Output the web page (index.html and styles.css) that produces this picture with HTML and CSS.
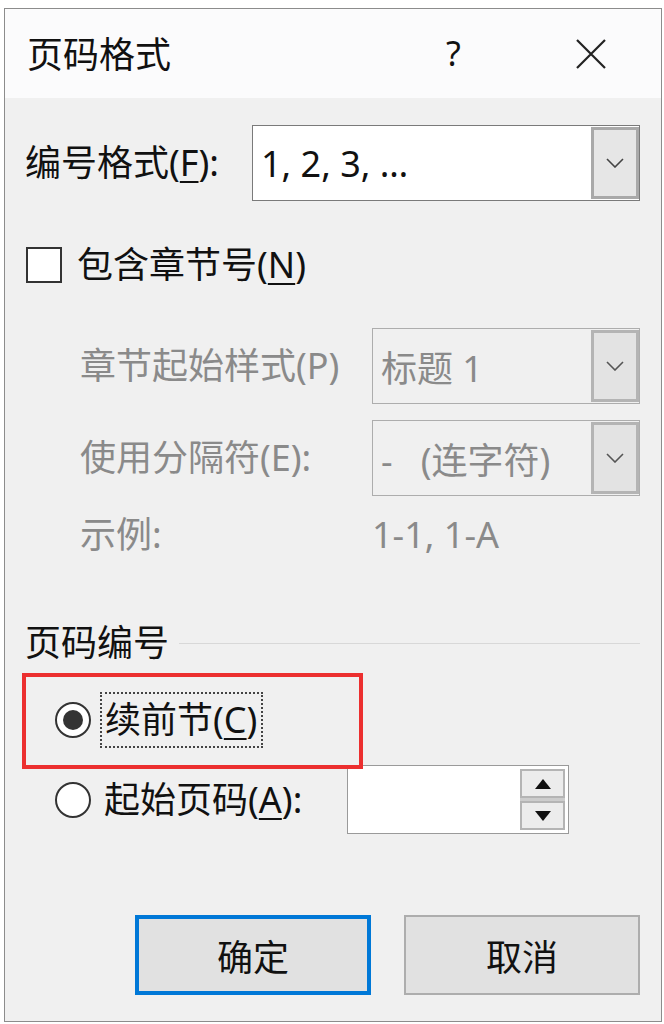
FILE: index.html
```html
<!DOCTYPE html>
<html lang="zh-CN">
<head>
    <meta charset="UTF-8">
    <meta name="viewport" content="width=device-width, initial-scale=1.0">
    <title>页码格式</title>
    <link rel="stylesheet" href="styles.css">
</head>
<body>
    <div class="dialog">
        <!-- 标题栏 -->
        <div class="titlebar">
            <span class="title">页码格式</span>
            <span class="help">?</span>
            <span class="close">
                <svg width="30" height="30" viewBox="0 0 30 30"><path d="M1 1L29 29M29 1L1 29" stroke="#222" stroke-width="2.2" fill="none"/></svg>
            </span>
        </div>

        <div class="content">
            <!-- 编号格式 -->
            <div class="row row-format">
                <label class="label label-main">编号格式(<u>F</u>):</label>
                <div class="combo">
                    <span class="combo-text">1, 2, 3, …</span>
                    <span class="drop"><svg width="18" height="10" viewBox="0 0 18 10"><path d="M1 1L9 9L17 1" stroke="#444" stroke-width="1.6" fill="none"/></svg></span>
                </div>
            </div>

            <!-- 包含章节号 -->
            <div class="row row-check">
                <span class="checkbox"></span>
                <span class="label">包含章节号(<u>N</u>)</span>
            </div>

            <div class="sub">
                <div class="row row-style">
                    <span class="label label-sub disabled">章节起始样式(P)</span>
                    <div class="combo combo-disabled">
                        <span class="combo-text">标题 1</span>
                        <span class="drop"><svg width="18" height="10" viewBox="0 0 18 10"><path d="M1 1L9 9L17 1" stroke="#555" stroke-width="1.6" fill="none"/></svg></span>
                    </div>
                </div>
                <div class="row row-sep">
                    <span class="label label-sub disabled">使用分隔符(E):</span>
                    <div class="combo combo-disabled">
                        <span class="combo-text">-&nbsp;&nbsp;&nbsp;(连字符)</span>
                        <span class="drop"><svg width="18" height="10" viewBox="0 0 18 10"><path d="M1 1L9 9L17 1" stroke="#555" stroke-width="1.6" fill="none"/></svg></span>
                    </div>
                </div>
                <div class="row row-example">
                    <span class="label label-sub disabled">示例:</span>
                    <span class="example disabled">1-1, 1-A</span>
                </div>
            </div>

            <!-- 页码编号 -->
            <div class="row group">
                <span class="label group-title">页码编号</span>
                <span class="group-line"></span>
            </div>

            <div class="numbering">
                <div class="highlight"></div>
                <div class="row row-radio">
                    <span class="radio checked"></span>
                    <span class="label focus">续前节(<u>C</u>)</span>
                </div>
                <div class="row row-radio2">
                    <span class="radio"></span>
                    <span class="label label-start">起始页码(<u>A</u>):</span>
                    <div class="spin">
                        <div class="spin-btns">
                            <span class="spin-btn"><svg width="16" height="10" viewBox="0 0 16 10"><path d="M8 0L16 10H0Z" fill="#111"/></svg></span>
                            <span class="spin-btn"><svg width="16" height="10" viewBox="0 0 16 10"><path d="M0 0H16L8 10Z" fill="#111"/></svg></span>
                        </div>
                    </div>
                </div>
            </div>

            <!-- 按钮 -->
            <div class="buttons">
                <button class="btn btn-default">确定</button>
                <button class="btn">取消</button>
            </div>
        </div>
    </div>
</body>
</html>
```

FILE: styles.css
```css
/* 页面 */
body {
    margin: 0;
    padding: 0;
    background: #ffffff;
    font-family: "Noto Sans", "Noto Sans CJK SC", sans-serif;
    color: #111111;
}

/* 对话框 */
.dialog {
    margin: 8px 2px 0 4px;
    height: 1012px;
    border: 1px solid #8c8c8c;
    background: #f0f0f0;
    display: flex;
    flex-direction: column;
}

.titlebar {
    height: 89px;
    flex-shrink: 0;
    background: #fbfbfc;
    display: flex;
    align-items: center;
    padding: 0 0 0 22px;
}

.title {
    font-size: 36px;
    line-height: 1.2;
    flex: 1;
    margin-top: 2px;
}

.help {
    font-size: 34px;
    line-height: 1.2;
    width: 30px;
    margin-right: 100px;
}

.close {
    display: flex;
    margin-right: 55px;
}

.content {
    padding: 0 21px 0 20px;
    display: flex;
    flex-direction: column;
    flex: 1;
}

/* 行 */
.row {
    display: flex;
    align-items: center;
    flex-shrink: 0;
}

.label {
    font-size: 36px;
    line-height: 1.2;
    white-space: nowrap;
}

.label u {
    text-decoration-thickness: 2px;
    text-underline-offset: 5px;
}

.label-main {
    width: 227px;
}

.disabled {
    color: #8a8a8a;
}

.row-format {
    margin-top: 27px;
}

.combo {
    flex: 1;
    height: 76px;
    box-sizing: border-box;
    border: 1px solid #7a7a7a;
    background: #ffffff;
    display: flex;
    align-items: stretch;
}

.combo-text {
    flex: 1;
    font-size: 36px;
    display: flex;
    align-items: center;
    padding-left: 8px;
}

.drop {
    width: 48px;
    box-sizing: border-box;
    border: 3px solid #a9a9a9;
    background: #e6e6e6;
    display: flex;
    align-items: center;
    justify-content: center;
    margin: 1px 0;
}

.combo-disabled {
    border-color: #adadad;
    background: #f0f0f0;
}

.combo-disabled .combo-text {
    color: #8a8a8a;
}

.combo-disabled .drop {
    border-color: #b4b4b4;
    background: #e3e3e3;
}

/* 复选框 */
.row-check {
    margin-top: 46px;
    height: 36px;
}

.checkbox {
    width: 36px;
    height: 36px;
    box-sizing: border-box;
    border: 2px solid #333333;
    background: #ffffff;
    margin: 0 15px 0 1px;
    flex-shrink: 0;
}

.sub {
    padding-left: 55px;
    display: flex;
    flex-direction: column;
}

.label-sub {
    width: 292px;
}

.row-style {
    margin-top: 45px;
}

.row-sep {
    margin-top: 16px;
}

.row-example {
    margin-top: 19px;
    height: 40px;
}

.example {
    font-size: 36px;
    line-height: 1.2;
}

/* 页码编号 */
.group {
    margin-top: 68px;
    height: 40px;
}

.group-title {
    margin-left: 0;
}

.group-line {
    flex: 1;
    height: 1px;
    background: #d8d8d8;
    margin-left: 10px;
}

.numbering {
    position: relative;
    display: flex;
    flex-direction: column;
    padding-left: 30px;
}

.highlight {
    position: absolute;
    left: -3px;
    top: 10px;
    width: 341px;
    height: 96px;
    box-sizing: border-box;
    border: 4px solid #ec2f2f;
}

.radio {
    width: 36px;
    height: 36px;
    box-sizing: border-box;
    border: 2px solid #333333;
    border-radius: 50%;
    background: #ffffff;
    display: flex;
    align-items: center;
    justify-content: center;
    flex-shrink: 0;
}

.radio.checked::after {
    content: "";
    width: 20px;
    height: 20px;
    border-radius: 50%;
    background: #333333;
}

.row-radio {
    margin-top: 29px;
    height: 56px;
}

.focus {
    margin-left: 9px;
    height: 56px;
    box-sizing: border-box;
    padding: 0 4px 0 3px;
    border: 2px dotted #444444;
    display: flex;
    align-items: center;
}

.row-radio2 {
    margin-top: 17px;
    height: 69px;
}

.label-start {
    margin-left: 13px;
    width: 243px;
}

.spin {
    width: 222px;
    height: 69px;
    box-sizing: border-box;
    border: 1px solid #9a9a9a;
    background: #ffffff;
    display: flex;
    justify-content: flex-end;
    padding: 3px 3px 3px 0;
}

.spin-btns {
    width: 45px;
    display: flex;
    flex-direction: column;
    gap: 3px;
    background: #cccccc;
}

.spin-btn {
    flex: 1;
    box-sizing: border-box;
    border: 2px solid #b4b4b4;
    background: #ececec;
    display: flex;
    align-items: center;
    justify-content: center;
}

/* 按钮 */
.buttons {
    display: flex;
    justify-content: flex-end;
    gap: 33px;
    margin-top: 81px;
    flex-shrink: 0;
}

.btn {
    width: 236px;
    height: 80px;
    box-sizing: border-box;
    border: 2px solid #adadad;
    background: #e1e1e1;
    font-family: "Noto Sans CJK SC", sans-serif;
    font-size: 36px;
    color: #111111;
    padding: 0;
}

.btn-default {
    border: 4px solid #0078d7;
}
```
